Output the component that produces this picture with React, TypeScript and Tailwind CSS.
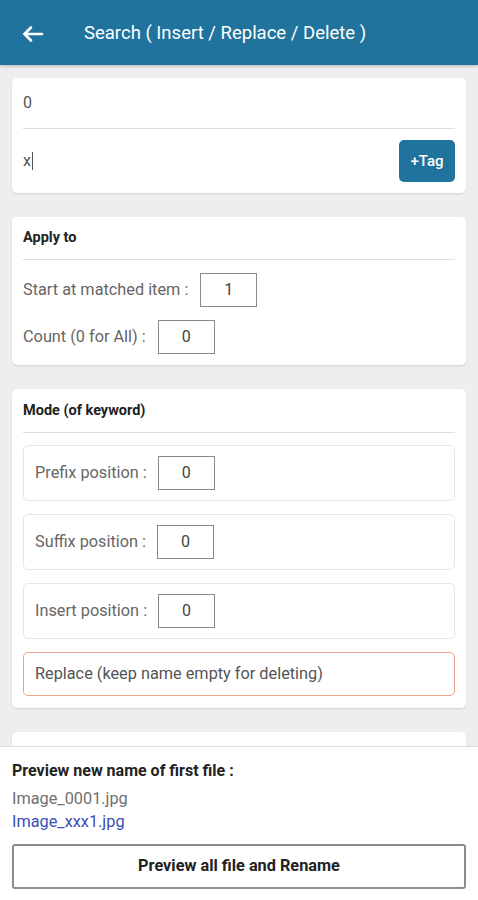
import React from "react";

function NumBox({ value }: { value: string }) {
  return (
    <div className="w-[57px] h-[34px] border border-[#8a8a8a] flex items-center justify-center text-[16px] text-[#444] bg-white">
      {value}
    </div>
  );
}

function SubCard({ label }: { label: string }) {
  return (
    <div className="h-[56px] border border-[#e6e6e6] rounded-[5px] px-[11px] flex items-center gap-[11px]">
      <span className="text-[16.3px] text-[#666]">{label}</span>
      <NumBox value="0" />
    </div>
  );
}

export default function App() {
  return (
    <div
      className="w-[478px] h-[900px] flex flex-col bg-[#eeeeee] overflow-hidden"
      style={{ fontFamily: "Roboto, 'Noto Sans', sans-serif" }}
    >
      <div className="h-[65px] shrink-0 bg-[#1f739c] flex items-center pt-[3px] text-white shadow-[0_1px_3px_rgba(0,0,0,0.25)]">
        <svg width="24" height="24" viewBox="0 0 24 24" className="ml-[21px]" fill="none" stroke="white" strokeWidth="2.6" strokeLinecap="round" strokeLinejoin="round">
          <path d="M21 12H3.5" />
          <path d="M10 5.5L3.5 12l6.5 6.5" />
        </svg>
        <span className="ml-[39px] text-[18.5px]">Search ( Insert / Replace / Delete )</span>
      </div>

      <div className="flex-1 min-h-0 overflow-hidden px-[12px] pt-[13px] flex flex-col gap-[24px]">
        <div className="bg-white rounded-[5px] shadow-[0_1px_2px_rgba(0,0,0,0.12)] px-[11px] shrink-0">
          <div className="h-[51px] flex items-center text-[16px] text-[#555] border-b border-[#dddddd]">0</div>
          <div className="h-[64px] flex items-center justify-between">
            <span className="text-[16px] text-[#555] border-r border-[#555] pr-[1px] leading-[18px]">x</span>
            <div className="w-[56px] h-[42px] rounded-[5px] bg-[#1f739c] text-white text-[15px] font-medium flex items-center justify-center">
              +Tag
            </div>
          </div>
        </div>

        <div className="bg-white rounded-[5px] shadow-[0_1px_2px_rgba(0,0,0,0.12)] px-[11px] pb-[11px] shrink-0">
          <div className="h-[43px] flex items-center text-[14.5px] font-bold text-[#222] border-b border-[#dddddd]">Apply to</div>
          <div className="pt-[13px] flex flex-col gap-[13px]">
            <div className="flex items-center gap-[12px]">
              <span className="text-[16.3px] text-[#666]">Start at matched item :</span>
              <NumBox value="1" />
            </div>
            <div className="flex items-center gap-[12px]">
              <span className="text-[16.3px] text-[#666]">Count (0 for All) :</span>
              <NumBox value="0" />
            </div>
          </div>
        </div>

        <div className="bg-white rounded-[5px] shadow-[0_1px_2px_rgba(0,0,0,0.12)] px-[11px] pb-[12px] shrink-0">
          <div className="h-[44px] flex items-center text-[14.5px] font-bold text-[#222] border-b border-[#dddddd]">Mode (of keyword)</div>
          <div className="pt-[12px] flex flex-col gap-[13px]">
            <SubCard label="Prefix position :" />
            <SubCard label="Suffix position :" />
            <SubCard label="Insert position :" />
            <div className="h-[44px] border border-[#e9a58a] rounded-[5px] px-[11px] flex items-center text-[16.3px] text-[#555]">
              Replace (keep name empty for deleting)
            </div>
          </div>
        </div>

        <div className="bg-white rounded-[5px] shadow-[0_1px_2px_rgba(0,0,0,0.12)] h-[100px] shrink-0" />
      </div>

      <div className="h-[154px] shrink-0 bg-white border-t border-[#dcdcdc] px-[12px] pt-[14px]">
        <div className="text-[16px] font-bold text-[#222] leading-[20px]">Preview new name of first file :</div>
        <div className="mt-[8px] text-[16.3px] text-[#707070] leading-[20px]">Image_0001.jpg</div>
        <div className="mt-[3px] text-[16.3px] text-[#3c4fb4] leading-[20px]">Image_xxx1.jpg</div>
        <div className="mt-[12px] h-[45px] border-2 border-[#8c8c8c] rounded-[3px] flex items-center justify-center text-[16.3px] font-bold text-[#222]">
          Preview all file and Rename
        </div>
      </div>
    </div>
  );
}
